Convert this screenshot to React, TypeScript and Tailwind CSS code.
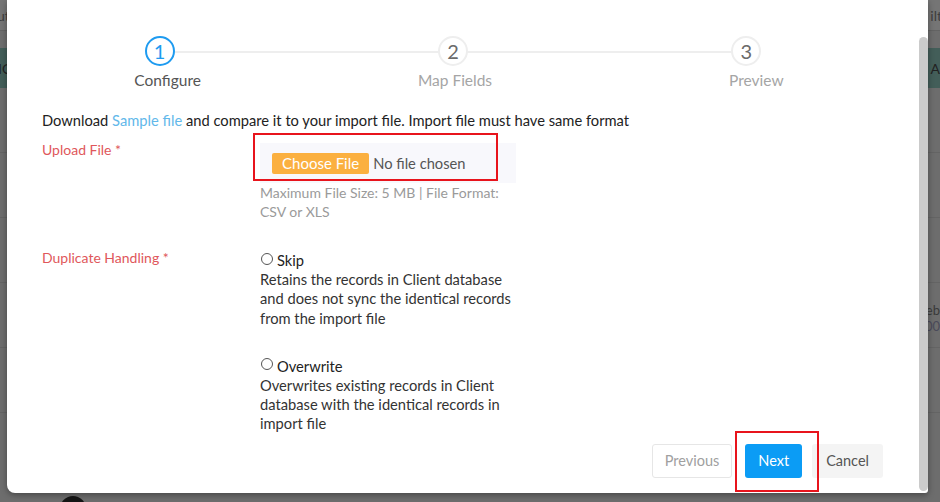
import { useState } from 'react';

type Step = { n: number; label: string };

const STEPS: Step[] = [
  { n: 1, label: 'Configure' },
  { n: 2, label: 'Map Fields' },
  { n: 3, label: 'Preview' },
];

const FONT = { fontFamily: 'Lato, "Open Sans", sans-serif' };

function Stepper({ active }: { active: number }) {
  return (
    <div className="relative grid grid-cols-3 w-[880px] ml-[6px] pt-[36px]">
      {/* connector line behind the circles */}
      <div className="absolute top-[51px] left-[147px] right-[147px] h-[2px] bg-[#eeeeee]" />
      {STEPS.map((s) => (
        <div key={s.n} className="relative flex flex-col items-center">
          <div
            className={`w-[30px] h-[30px] rounded-full border-2 bg-white flex items-center justify-center text-[20px] leading-none ${
              s.n === active ? 'border-[#1e9bf0] text-[#1e9bf0]' : 'border-[#eeeeee] text-[#6b6b6b]'
            }`}
          >
            {s.n}
          </div>
          <div
            className={`mt-[4px] text-[15.5px] leading-[20px] ${
              s.n === active ? 'text-[#555555] ml-[16px]' : 'text-[#a5a5a5] ml-[4px]'
            } ${s.n === 3 ? 'ml-[20px]' : ''}`}
          >
            {s.label}
          </div>
        </div>
      ))}
    </div>
  );
}

function Radio({ label, desc }: { label: string; desc: string[] }) {
  return (
    <div>
      <div className="flex items-center h-[20px]">
        <span className="w-[12px] h-[12px] rounded-full border border-[#555555] bg-white ml-[1px] mr-[4px] -mt-[3px]" />
        <span className="text-[14.7px] text-[#222222]">{label}</span>
      </div>
      {desc.map((d) => (
        <div key={d} className="text-[14.7px] leading-[19.3px] text-[#333333]">
          {d}
        </div>
      ))}
    </div>
  );
}

function BackgroundPage() {
  return (
    <div className="absolute inset-0 bg-[#6d6d6d]">
      <div className="h-[31px] bg-[#757575] border-b border-[#636363] flex justify-between items-center text-[#3d3d3d] text-[14px]">
        <span className="-ml-[3px]">ut</span>
        <span className="-mr-[2px]">ilt</span>
      </div>
      <div className="mt-[17px] h-[40px] bg-[#435e59] flex justify-between items-center text-[#222222] text-[14px]">
        <span className="-ml-[2px]">IC</span>
        <span>t A</span>
      </div>
      {[0, 1, 2, 3, 4].map((i) => (
        <div key={i} className="h-[65px] border-b border-[#646464]" />
      ))}
      <div className="absolute right-0 top-[302px] text-[13px] leading-[16px] text-[#3a3a3a] text-right">
        <div>eb</div>
        <div className="text-[#4a4a5a]">00</div>
      </div>
      <div className="absolute left-[60px] top-[496px] w-[26px] h-[26px] rounded-full bg-[#151515]" />
    </div>
  );
}

export default function App() {
  const [mode, setMode] = useState<'skip' | 'overwrite' | null>(null);
  void mode;
  void setMode;

  return (
    <div className="relative w-[940px] h-[502px] overflow-hidden" style={FONT}>
      <BackgroundPage />

      <div className="absolute left-[7px] top-0 w-[921px] h-[493px] bg-white rounded-bl-[8px] rounded-br-[3px] shadow-[0_2px_6px_rgba(0,0,0,0.35)] flex flex-col">
        <Stepper active={1} />

        <div className="pl-[35px] pr-[45px] flex-1 flex flex-col">
          <p className="mt-[20px] text-[14.7px] leading-[20px] text-[#222222]">
            Download <span className="text-[#62b8ea]">Sample file</span> and compare it to your import file.
            Import file must have same format
          </p>

          <div className="flex mt-[10px]">
            <div className="w-[218px] text-[14px] leading-[20px] text-[#e0575b]">Upload File *</div>
            <div className="w-[256px]">
              <div className="relative mt-[3px] h-[40px] bg-[#f8f8fc] flex items-center pl-[12px]">
                <span className="h-[21px] px-[10px] rounded-[2px] bg-[#fbb040] text-white text-[15px] leading-[21px]">
                  Choose File
                </span>
                <span className="ml-[4px] text-[14.7px] text-[#555555]">No file chosen</span>
                {/* annotation box */}
                <div className="absolute -left-[7px] -top-[10px] w-[245px] h-[48px] border-2 border-[#e8141c]" />
              </div>
              <div className="text-[14px] leading-[19px] text-[#9a9a9a]">
                Maximum File Size: 5 MB | File Format: CSV or XLS
              </div>
            </div>
          </div>

          <div className="flex mt-[27px]">
            <div className="w-[218px] text-[14px] leading-[20px] text-[#e0575b]">Duplicate Handling *</div>
            <div className="w-[265px] mt-[2px] flex flex-col gap-[28px]">
              <Radio
                label="Skip"
                desc={[
                  'Retains the records in Client database',
                  'and does not sync the identical records',
                  'from the import file',
                ]}
              />
              <Radio
                label="Overwrite"
                desc={[
                  'Overwrites existing records in Client',
                  'database with the identical records in',
                  'import file',
                ]}
              />
            </div>
          </div>

          <div className="flex justify-end items-center mt-[10px]">
            <button className="h-[34px] px-[12px] rounded-[3px] border border-[#e6e6e6] bg-white text-[14.5px] text-[#a0a0a0]">
              Previous
            </button>
            <div className="relative ml-[13px]">
              <button className="h-[34px] px-[13px] rounded-[3px] bg-[#0b9cf5] text-[14.5px] text-white">Next</button>
              <div className="absolute -left-[10px] -top-[13px] w-[84px] h-[61px] border-2 border-[#e8141c]" />
            </div>
            <button className="ml-[10px] h-[34px] px-[14px] rounded-[3px] bg-[#f4f4f4] text-[14.5px] text-[#555555]">
              Cancel
            </button>
          </div>
        </div>

        {/* scrollbar */}
        <div className="absolute right-0 top-[37px] w-[9px] h-[454px] rounded-full bg-[#cbcbcb]" />
      </div>
    </div>
  );
}
